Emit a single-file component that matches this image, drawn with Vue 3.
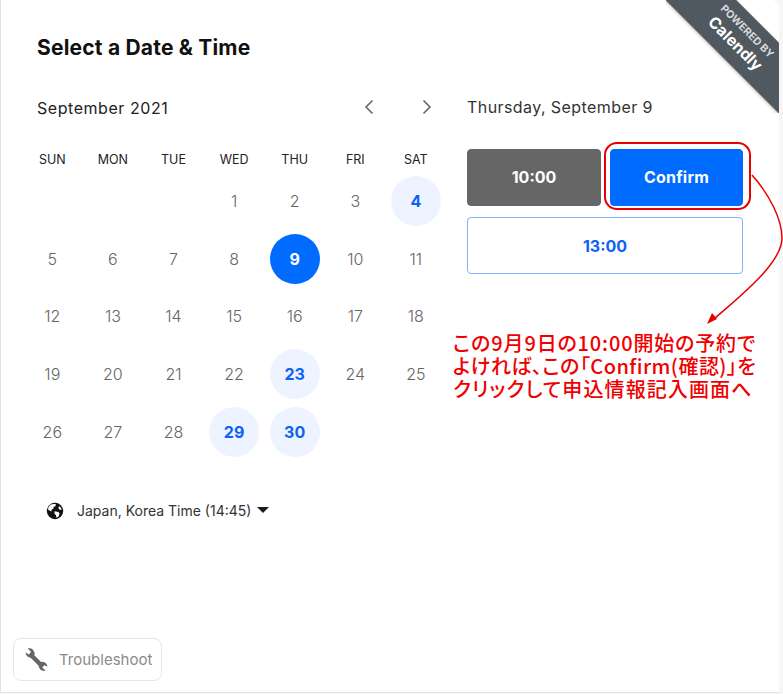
<script setup>
const heads = ['SUN','MON','TUE','WED','THU','FRI','SAT']
const avail = [4, 23, 29, 30]
const cells = [...Array(3).fill(0), ...Array.from({ length: 30 }, (_, i) => i + 1)]
function cls(d) {
  if (d === 9) return 'sel'
  if (avail.includes(d)) return 'avail'
  return ''
}
</script>

<template>
  <div class="card">
    <div class="ribbon"><div class="rib-in"><span class="rib-a">POWERED BY</span><span class="rib-b">Calendly</span></div></div>
    <div class="main">
      <section class="left">
        <h1 class="title">Select a Date &amp; Time</h1>
        <div class="month">
          <span>September 2021</span>
          <div class="navs">
            <svg width="12" height="16" viewBox="0 0 12 16"><path d="M9.5 1.5 3 8l6.5 6.5" fill="none" stroke="#666" stroke-width="1.6"/></svg>
            <svg width="12" height="16" viewBox="0 0 12 16"><path d="M2.5 1.5 9 8l-6.5 6.5" fill="none" stroke="#666" stroke-width="1.6"/></svg>
          </div>
        </div>
        <div class="grid heads"><div v-for="h in heads" :key="h">{{ h }}</div></div>
        <div class="grid days">
          <div v-for="(d, i) in cells" :key="i" class="cell">
            <span v-if="d" class="day" :class="cls(d)">{{ d }}</span>
          </div>
        </div>
        <div class="tz">
          <svg width="18" height="18" viewBox="0 0 18 18"><circle cx="9" cy="9" r="8.200" fill="#111"/><path d="M4 3.200c2-1.400 4.500-1.600 6-.8l-.6 1.800-2 .8.300 1.400-1.800.8-.6 2.200-3.200-1.600C2 6 2.800 4.200 4 3.200ZM8.600 9.200l3.800.8 1.200 1.600-1 2.800-2 1.400-.8-2.800-1.400-1.600ZM13.500 4.200c1.200 1 2 2.400 2.100 3.800l-2.300-.6-1-1.800Z" fill="#fff"/></svg>
          <span class="tz-text">Japan, Korea Time (14:45)</span>
          <span class="caret"></span>
        </div>
      </section>
      <section class="right">
        <div class="date">Thursday, September 9</div>
        <div class="row">
          <button class="slot grey">10:00</button>
          <button class="slot blue">Confirm</button>
        </div>
        <button class="slot line">13:00</button>
      </section>
    </div>
    <div class="foot">
      <div class="trouble">
        <svg class="wrench" width="25" height="25" viewBox="0 0 25 25">
          <path d="M7.500 8.500 18 19" fill="none" stroke="#666" stroke-width="4.500"/>
          <path d="M1.500 5.500C1.800 8.800 4.500 10.800 7.500 10.500C10 10 11 7.600 10.500 5.500L8.800 2.500C7.400 1.400 5.400 1 3.800 1.600L7 4.800 5 7.400Z" fill="#666"/>
          <path d="M23.500 19.500C23.200 16.800 21 14.500 18 14.800C15.500 15.200 14.200 17.400 14.800 20L16.500 22.800C18 23.800 20 24.200 21.500 23.600L18.300 20.600 20.300 18.200Z" fill="#666"/>
        </svg>
        <span>Troubleshoot</span>
      </div>
    </div>
    <div class="ring"></div>
    <svg class="arrow" width="90" height="160" viewBox="700 170 90 160">
      <path d="M752 175C770 195 782 220 782 238C782 262 745 292 714 319" fill="none" stroke="#e60000" stroke-width="1.500"/>
      <path d="M707 324 717 319 712 313Z" fill="#e60000"/>
    </svg>
    <div class="note">
      <div class="n1">この9月9日の10:00開始の予約で</div>
      <div class="n2">よければ、この「Confirm(確認)」を</div>
      <div class="n3">クリックして申込情報記入画面へ</div>
    </div>
  </div>
</template>

<style>
html, body { margin: 0; background: #f6f6f6; }
</style>

<style scoped>
.card {
  position: relative;
  box-sizing: border-box;
  width: 779px;
  height: 693px;
  background: #fff;
  border-left: 1px solid #e2e2e2;
  border-bottom: 1px solid #e2e2e2;
  border-top-right-radius: 8px;
  font-family: Inter, "Noto Sans", sans-serif;
  color: #1a1a1a;
  display: flex;
  flex-direction: column;
  justify-content: space-between;
}
.main { display: flex; padding-left: 21px; }
.left { width: 424px; }
.title { margin: 37px 0 0 15px; font-size: 21px; line-height: 22px; font-weight: 700; color: #111; letter-spacing: .2px; }
.month {
  margin: 39px 0 0 15px;
  height: 20px;
  display: flex;
  align-items: center;
  justify-content: space-between;
  font-size: 16px;
  color: #222;
  letter-spacing: .55px;
}
.navs { display: flex; gap: 46px; margin-right: 13px; margin-top: -3px; }
.grid { display: grid; grid-template-columns: repeat(7, 60.6px); }
.heads { margin-top: 32px; height: 20px; font-size: 12.500px; line-height: 20px; text-align: center; color: #222; }
.days { grid-auto-rows: 57.6px; margin-top: 2.500px; }
.cell { display: flex; align-items: center; justify-content: center; }
.day {
  width: 50px; height: 50px; border-radius: 50%;
  display: flex; align-items: center; justify-content: center;
  font-size: 16px; font-weight: 300; color: #666;
}
.day.avail { background: #edf4ff; color: #0b62f5; font-weight: 700; }
.day.sel { background: #006bff; color: #fff; font-weight: 700; }
.tz { display: flex; align-items: center; margin: 41.500px 0 0 24px; }
.tz-text { margin-left: 13px; font-size: 14px; color: #333; }
.caret { margin-left: 6px; margin-top: -2px; border: 6px solid transparent; border-top: 6px solid #1a1a1a; border-bottom: 0; }
.right { margin-left: 21px; width: 276px; }
.date { margin-top: 96px; font-size: 16px; line-height: 22px; color: #333; letter-spacing: .42px; }
.row { display: flex; gap: 9px; margin-top: 31px; }
.slot {
  box-sizing: border-box; height: 57px; border-radius: 4px; padding: 0;
  font-family: inherit; font-size: 16px; font-weight: 700;
  display: flex; align-items: center; justify-content: center;
}
.row .slot { padding-bottom: 2px; }
.grey { width: 134px; border: 1px solid #666; background: #666; color: #fff; }
.blue { width: 133px; border: 1px solid #006bff; background: #006bff; color: #fff; letter-spacing: .2px; }
.line { width: 276px; margin-top: 11px; border: 1px solid #80b1fb; background: #fff; color: #0b62f5; }
.foot { padding: 0 0 11px 12px; }
.trouble {
  box-sizing: border-box; width: 149px; height: 43px;
  border: 1px solid #e6e6e6; border-radius: 8px;
  display: flex; align-items: center; padding-left: 10px; gap: 10px;
  font-size: 15px; color: #8a8a8a;
}
.ring {
  position: absolute; left: 603px; top: 142px; width: 147px; height: 68px;
  box-sizing: border-box; border: 2px solid #e60000; border-radius: 13px;
}
.arrow { position: absolute; left: 699px; top: 170px; overflow: visible; }
.note {
  position: absolute; left: 452px; top: 331px; white-space: nowrap;
  font-family: "Noto Sans CJK JP", sans-serif; font-size: 20px; line-height: 23px;
  font-weight: 500; color: #f00000; font-feature-settings: "palt";
}
.n1 { letter-spacing: .85px; }
.n2 { letter-spacing: .45px; }
.n3 { letter-spacing: 1.100px; }
.ribbon {
  position: absolute; right: 0; top: 0; width: 113px; height: 113px; overflow: hidden; border-top-right-radius: 8px;
}
.rib-in {
  position: absolute; left: -36px; top: 14px; width: 220px; height: 49.500px;
  transform: rotate(45deg);
  background: #505960;
  color: #fff;
  display: flex; flex-direction: column; align-items: center; justify-content: center;
  box-shadow: 0 1px 3px rgba(0,0,0,.3);
}
.rib-a { font-size: 10.500px; font-weight: 700; line-height: 13px; color: #d8dadc; }
.rib-b { font-size: 16px; font-weight: 700; line-height: 20px; }
</style>
